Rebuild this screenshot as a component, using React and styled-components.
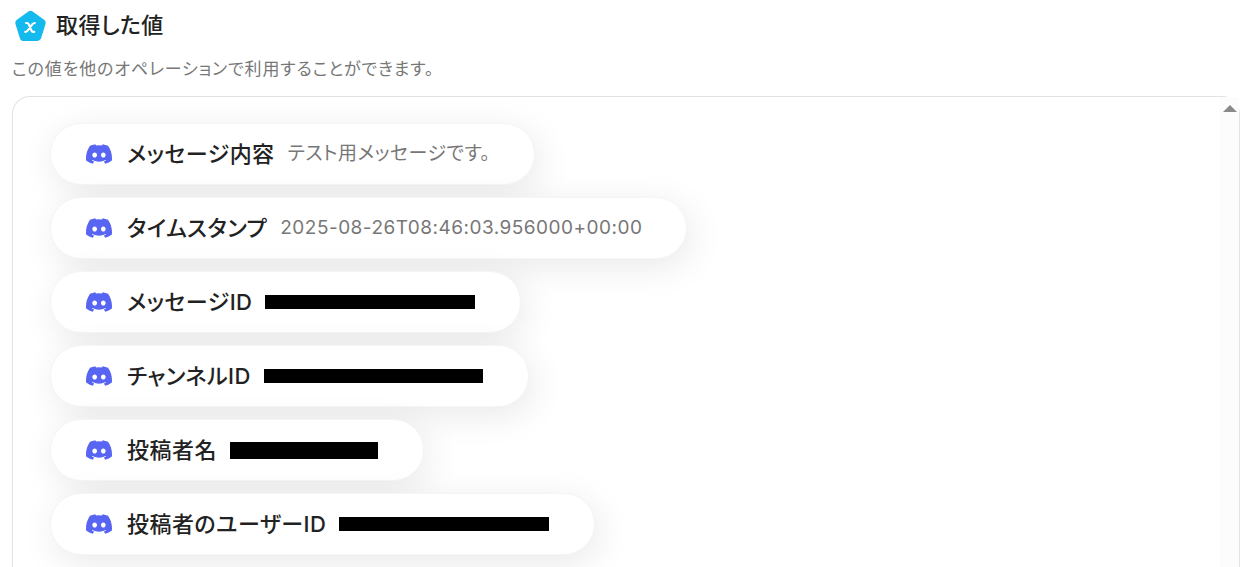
import React from "react";
import styled, { createGlobalStyle } from "styled-components";

const GlobalStyle = createGlobalStyle`
  * { box-sizing: border-box; }
  body {
    margin: 0;
    background: #fff;
    color: #222;
    font-family: Inter, "Noto Sans CJK JP", sans-serif;
    font-feature-settings: "palt";
  }
`;

const Page = styled.main`
  display: flex;
  flex-direction: column;
  height: 100vh;
  padding: 8px 12px 0;
  overflow: hidden;
  letter-spacing: 0.03em;
`;

const Header = styled.header`
  display: flex;
  align-items: center;
  gap: 8px;
  height: 34px;
  padding-left: 2px;
`;

const Title = styled.h1`
  margin: 0;
  font-size: 22px;
  line-height: 34px;
  font-weight: 500;
  letter-spacing: 0.02em;
`;

const Description = styled.p`
  margin: 15px 0;
  font-size: 17px;
  line-height: 24px;
  letter-spacing: 0.05em;
  color: #777;
`;

const Panel = styled.section`
  display: flex;
  flex: 1;
  min-height: 0;
  border: 1px solid #e2e2e2;
  border-bottom: 0;
  border-radius: 18px 18px 0 0;
`;

const ValueList = styled.ul`
  display: flex;
  flex: 1;
  flex-direction: column;
  align-items: flex-start;
  gap: 12px;
  margin: 0;
  padding: 26px 37px;
  overflow: hidden;
  list-style: none;
`;

const ValuePill = styled.li`
  display: flex;
  flex: none;
  align-items: center;
  height: 62px;
  padding: 0 44px 0 35px;
  border: 1px solid #f5f5f5;
  border-radius: 31px;
  background: #fff;
  box-shadow: 4px 8px 36px rgba(0, 0, 0, 0.09);
  white-space: nowrap;
`;

const Name = styled.span`
  margin: 0 13px 0 15px;
  font-size: 22px;
  line-height: 32px;
  font-weight: 500;
`;

const Value = styled.span`
  font-size: 19px;
  line-height: 32px;
  color: #777;
`;

const Redaction = styled.span`
  width: ${(p) => p.$width}px;
  height: ${(p) => p.$height}px;
  margin-right: 1px;
  background: #000;
`;

const ScrollTrack = styled.div`
  display: flex;
  flex: none;
  justify-content: center;
  width: 19px;
  padding-top: 8px;
  background: #fcfcfc;
`;

const LogoIcon = () => (
  <svg width="34" height="34" viewBox="0 0 34 34" aria-hidden="true">
    <path
      d="M14.4 3.6Q16.5 2 18.6 3.6L30.4 12.1Q32.3 13.5 31.6 15.8L27.1 30.2Q26.2 33 23.4 33H9.6Q6.8 33 5.9 30.2L1.4 15.8Q.7 13.5 2.6 12.1Z"
      fill="#14b9ee"
    />
    <path
      d="M12 15H13Q14.2 15 14.8 16.4L17.4 22.5Q18 23.9 19.2 23.9H20.2M20.8 15Q19.5 14.9 18.5 16.2L13.6 22.6Q12.6 23.9 11.2 23.9"
      fill="none"
      stroke="#fff"
      strokeWidth="2.1"
      strokeLinecap="round"
    />
  </svg>
);

const DiscordIcon = () => (
  <svg width="26" height="20" viewBox="0 0 127.14 96.36" aria-hidden="true">
    <path
      fill="#5865f2"
      d="M107.7,8.07A105.15,105.15,0,0,0,81.47,0a72.06,72.06,0,0,0-3.36,6.83A97.68,97.68,0,0,0,49,6.83,72.37,72.37,0,0,0,45.64,0,105.89,105.89,0,0,0,19.39,8.09C2.79,32.65-1.71,56.6.54,80.21h0A105.73,105.73,0,0,0,32.71,96.36,77.7,77.7,0,0,0,39.6,85.25a68.42,68.42,0,0,1-10.85-5.18c.91-.66,1.8-1.34,2.66-2a75.57,75.57,0,0,0,64.32,0c.87.71,1.76,1.39,2.66,2a68.68,68.68,0,0,1-10.87,5.19,77,77,0,0,0,6.89,11.1A105.25,105.25,0,0,0,126.6,80.22h0C129.24,52.84,122.09,29.11,107.7,8.07ZM42.45,65.69C36.18,65.69,31,60,31,53s5-12.74,11.43-12.74S54,46,53.89,53,48.84,65.69,42.45,65.69Zm42.24,0C78.41,65.69,73.25,60,73.25,53s5-12.74,11.44-12.74S96.23,46,96.12,53,91.08,65.69,84.69,65.69Z"
    />
  </svg>
);

const ScrollUpIcon = () => (
  <svg width="14" height="7" viewBox="0 0 14 7" aria-hidden="true">
    <path d="M7 0L14 7H0Z" fill="#8a8a8a" />
  </svg>
);

const values = [
  { name: "メッセージ内容", text: "テスト用メッセージです。" },
  { name: "タイムスタンプ", text: "2025-08-26T08:46:03.956000+00:00" },
  { name: "メッセージID", width: 210, height: 14 },
  { name: "チャンネルID", width: 219, height: 14 },
  { name: "投稿者名", width: 148, height: 17 },
  { name: "投稿者のユーザーID", width: 210, height: 14 },
];

export default function App() {
  return (
    <>
      <GlobalStyle />
      <Page>
        <Header>
          <LogoIcon />
          <Title>取得した値</Title>
        </Header>
        <Description>この値を他のオペレーションで利用することができます。</Description>
        <Panel>
          <ValueList>
            {values.map((v) => (
              <ValuePill key={v.name}>
                <DiscordIcon />
                <Name>{v.name}</Name>
                {v.text ? (
                  <Value>{v.text}</Value>
                ) : (
                  <Redaction $width={v.width} $height={v.height} />
                )}
              </ValuePill>
            ))}
          </ValueList>
          <ScrollTrack>
            <ScrollUpIcon />
          </ScrollTrack>
        </Panel>
      </Page>
    </>
  );
}
